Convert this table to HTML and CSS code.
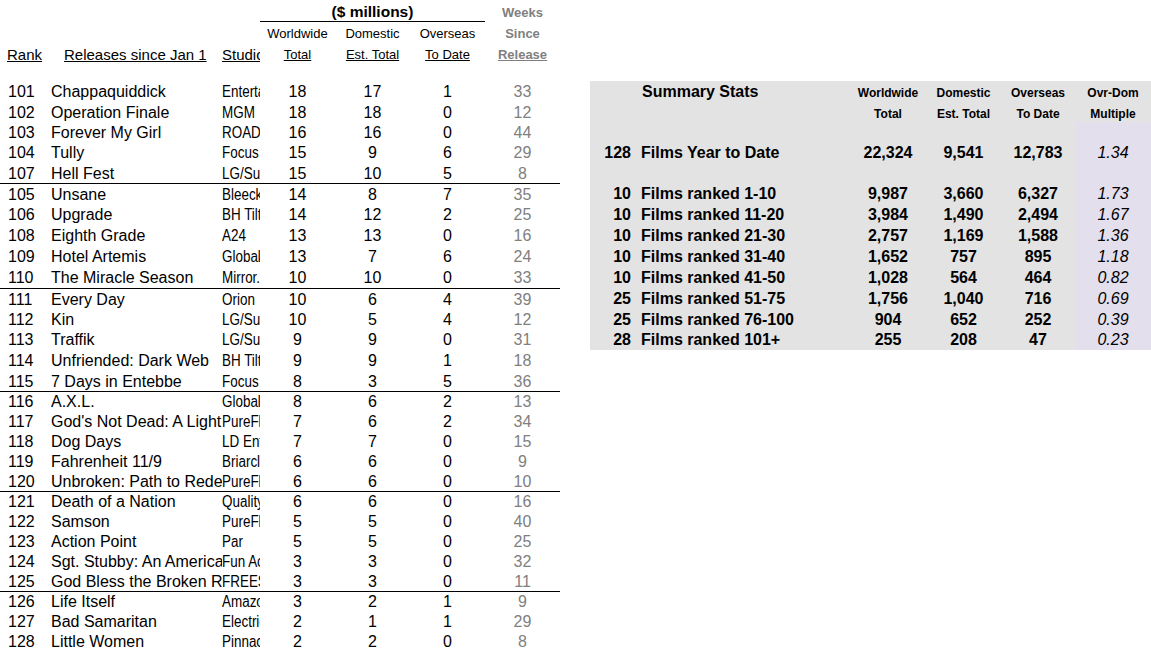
FILE: index.html
```html
<!DOCTYPE html>
<html>
<head>
<meta charset="utf-8">
<link rel="stylesheet" href="styles.css">
</head>
<body>
<div class="page">
  <div class="films">
    <div class="row hdr top h20">
      <div></div><div></div><div></div>
      <div class="millions">($ millions)</div>
      <div class="c gray b">Weeks</div>
    </div>
    <div class="row hdr h21">
      <div></div><div></div><div></div>
      <div class="c">Worldwide</div><div class="c">Domestic</div><div class="c">Overseas</div><div class="c gray b">Since</div>
    </div>
    <div class="row hdr h21">
      <div class="rank"><u class="big">Rank</u></div>
      <div class="title-h"><u class="big">Releases since Jan 1</u></div>
      <div class="studio-h"><u class="big">Studio</u></div>
      <div class="c"><u>Total</u></div><div class="c"><u>Est. Total</u></div><div class="c"><u>To Date</u></div><div class="c gray b"><u>Release</u></div>
    </div>
    <div class="row h17"></div>

    <div class="row data h204"><div class="rank">101</div><div class="title">Chappaquiddick</div><div class="studio"><span>Entertainment Studios</span></div><div class="c">18</div><div class="c">17</div><div class="c">1</div><div class="c gray">33</div></div>
    <div class="row data h204"><div class="rank">102</div><div class="title">Operation Finale</div><div class="studio"><span>MGM</span></div><div class="c">18</div><div class="c">18</div><div class="c">0</div><div class="c gray">12</div></div>
    <div class="row data h204"><div class="rank">103</div><div class="title">Forever My Girl</div><div class="studio"><span>ROADSIDE</span></div><div class="c">16</div><div class="c">16</div><div class="c">0</div><div class="c gray">44</div></div>
    <div class="row data h204"><div class="rank">104</div><div class="title">Tully</div><div class="studio"><span>Focus Features</span></div><div class="c">15</div><div class="c">9</div><div class="c">6</div><div class="c gray">29</div></div>
    <div class="row data h204"><div class="rank">107</div><div class="title">Hell Fest</div><div class="studio"><span>LG/Summit</span></div><div class="c">15</div><div class="c">10</div><div class="c">5</div><div class="c gray">8</div></div>

    <div class="row data h21 sep"><div class="rank">105</div><div class="title">Unsane</div><div class="studio"><span>Bleecker Street</span></div><div class="c">14</div><div class="c">8</div><div class="c">7</div><div class="c gray">35</div></div>
    <div class="row data h21"><div class="rank">106</div><div class="title">Upgrade</div><div class="studio"><span>BH Tilt</span></div><div class="c">14</div><div class="c">12</div><div class="c">2</div><div class="c gray">25</div></div>
    <div class="row data h21"><div class="rank">108</div><div class="title">Eighth Grade</div><div class="studio"><span>A24</span></div><div class="c">13</div><div class="c">13</div><div class="c">0</div><div class="c gray">16</div></div>
    <div class="row data h21"><div class="rank">109</div><div class="title">Hotel Artemis</div><div class="studio"><span>Global Road</span></div><div class="c">13</div><div class="c">7</div><div class="c">6</div><div class="c gray">24</div></div>
    <div class="row data h21"><div class="rank">110</div><div class="title">The Miracle Season</div><div class="studio"><span>Mirror.</span></div><div class="c">10</div><div class="c">10</div><div class="c">0</div><div class="c gray">33</div></div>

    <div class="row data h206 sep"><div class="rank">111</div><div class="title">Every Day</div><div class="studio"><span>Orion</span></div><div class="c">10</div><div class="c">6</div><div class="c">4</div><div class="c gray">39</div></div>
    <div class="row data h206"><div class="rank">112</div><div class="title">Kin</div><div class="studio"><span>LG/Summit</span></div><div class="c">10</div><div class="c">5</div><div class="c">4</div><div class="c gray">12</div></div>
    <div class="row data h206"><div class="rank">113</div><div class="title">Traffik</div><div class="studio"><span>LG/Summit</span></div><div class="c">9</div><div class="c">9</div><div class="c">0</div><div class="c gray">31</div></div>
    <div class="row data h206"><div class="rank">114</div><div class="title">Unfriended: Dark Web</div><div class="studio"><span>BH Tilt</span></div><div class="c">9</div><div class="c">9</div><div class="c">1</div><div class="c gray">18</div></div>
    <div class="row data h206"><div class="rank">115</div><div class="title">7 Days in Entebbe</div><div class="studio"><span>Focus Features</span></div><div class="c">8</div><div class="c">3</div><div class="c">5</div><div class="c gray">36</div></div>

    <div class="row data h20 sep"><div class="rank">116</div><div class="title">A.X.L.</div><div class="studio"><span>Global Road</span></div><div class="c">8</div><div class="c">6</div><div class="c">2</div><div class="c gray">13</div></div>
    <div class="row data h20"><div class="rank">117</div><div class="title">God's Not Dead: A Light in Darkness</div><div class="studio"><span>PureFlix</span></div><div class="c">7</div><div class="c">6</div><div class="c">2</div><div class="c gray">34</div></div>
    <div class="row data h20"><div class="rank">118</div><div class="title">Dog Days</div><div class="studio"><span>LD Entertainment</span></div><div class="c">7</div><div class="c">7</div><div class="c">0</div><div class="c gray">15</div></div>
    <div class="row data h20"><div class="rank">119</div><div class="title">Fahrenheit 11/9</div><div class="studio"><span>Briarcliff</span></div><div class="c">6</div><div class="c">6</div><div class="c">0</div><div class="c gray">9</div></div>
    <div class="row data h20"><div class="rank">120</div><div class="title">Unbroken: Path to Redemption</div><div class="studio"><span>PureFlix</span></div><div class="c">6</div><div class="c">6</div><div class="c">0</div><div class="c gray">10</div></div>

    <div class="row data h20 sep"><div class="rank">121</div><div class="title">Death of a Nation</div><div class="studio"><span>Quality Flix</span></div><div class="c">6</div><div class="c">6</div><div class="c">0</div><div class="c gray">16</div></div>
    <div class="row data h20"><div class="rank">122</div><div class="title">Samson</div><div class="studio"><span>PureFlix</span></div><div class="c">5</div><div class="c">5</div><div class="c">0</div><div class="c gray">40</div></div>
    <div class="row data h20"><div class="rank">123</div><div class="title">Action Point</div><div class="studio"><span>Par</span></div><div class="c">5</div><div class="c">5</div><div class="c">0</div><div class="c gray">25</div></div>
    <div class="row data h20"><div class="rank">124</div><div class="title">Sgt. Stubby: An American Hero</div><div class="studio"><span>Fun Academy</span></div><div class="c">3</div><div class="c">3</div><div class="c">0</div><div class="c gray">32</div></div>
    <div class="row data h20"><div class="rank">125</div><div class="title">God Bless the Broken Road</div><div class="studio"><span>FREESTYLE</span></div><div class="c">3</div><div class="c">3</div><div class="c">0</div><div class="c gray">11</div></div>

    <div class="row data h20 sep"><div class="rank">126</div><div class="title">Life Itself</div><div class="studio"><span>Amazon</span></div><div class="c">3</div><div class="c">2</div><div class="c">1</div><div class="c gray">9</div></div>
    <div class="row data h20"><div class="rank">127</div><div class="title">Bad Samaritan</div><div class="studio"><span>Electric</span></div><div class="c">2</div><div class="c">1</div><div class="c">1</div><div class="c gray">29</div></div>
    <div class="row data h20"><div class="rank">128</div><div class="title">Little Women</div><div class="studio"><span>Pinnacle</span></div><div class="c">2</div><div class="c">2</div><div class="c">0</div><div class="c gray">8</div></div>
  </div>

  <div class="summary">
    <div class="srow h204 shdr">
      <div></div><div class="stitle">Summary Stats</div>
      <div class="c sm">Worldwide</div><div class="c sm">Domestic</div><div class="c sm">Overseas</div><div class="c sm">Ovr-Dom</div>
    </div>
    <div class="srow h204 shdr">
      <div></div><div></div>
      <div class="c sm">Total</div><div class="c sm">Est. Total</div><div class="c sm">To Date</div><div class="c sm">Multiple</div>
    </div>
    <div class="srow h204"><div></div><div></div><div></div><div></div><div></div><div class="mult"></div></div>
    <div class="srow h204 sdata"><div class="cnt">128</div><div class="lbl">Films Year to Date</div><div class="c">22,324</div><div class="c">9,541</div><div class="c">12,783</div><div class="c mult">1.34</div></div>
    <div class="srow h204"><div></div><div></div><div></div><div></div><div></div><div class="mult"></div></div>
    <div class="srow h21 sdata"><div class="cnt">10</div><div class="lbl">Films ranked 1-10</div><div class="c">9,987</div><div class="c">3,660</div><div class="c">6,327</div><div class="c mult">1.73</div></div>
    <div class="srow h21 sdata"><div class="cnt">10</div><div class="lbl">Films ranked 11-20</div><div class="c">3,984</div><div class="c">1,490</div><div class="c">2,494</div><div class="c mult">1.67</div></div>
    <div class="srow h21 sdata"><div class="cnt">10</div><div class="lbl">Films ranked 21-30</div><div class="c">2,757</div><div class="c">1,169</div><div class="c">1,588</div><div class="c mult">1.36</div></div>
    <div class="srow h21 sdata"><div class="cnt">10</div><div class="lbl">Films ranked 31-40</div><div class="c">1,652</div><div class="c">757</div><div class="c">895</div><div class="c mult">1.18</div></div>
    <div class="srow h21 sdata"><div class="cnt">10</div><div class="lbl">Films ranked 41-50</div><div class="c">1,028</div><div class="c">564</div><div class="c">464</div><div class="c mult">0.82</div></div>
    <div class="srow h206 sdata"><div class="cnt">25</div><div class="lbl">Films ranked 51-75</div><div class="c">1,756</div><div class="c">1,040</div><div class="c">716</div><div class="c mult">0.69</div></div>
    <div class="srow h206 sdata"><div class="cnt">25</div><div class="lbl">Films ranked 76-100</div><div class="c">904</div><div class="c">652</div><div class="c">252</div><div class="c mult">0.39</div></div>
    <div class="srow h206 sdata"><div class="cnt">28</div><div class="lbl">Films ranked 101+</div><div class="c">255</div><div class="c">208</div><div class="c">47</div><div class="c mult">0.23</div></div>
  </div>
</div>
</body>
</html>
```

FILE: styles.css
```css
html, body {
  margin: 0;
  padding: 0;
  background: #ffffff;
}
body {
  font-family: "Liberation Sans", Arial, sans-serif;
  color: #000;
  font-size: 16px;
}
.page {
  display: flex;
  align-items: flex-start;
  width: 1151px;
  height: 651px;
  overflow: hidden;
}
.films {
  width: 560px;
  flex: none;
  padding-top: 2px;
}
.row {
  display: grid;
  grid-template-columns: 51px 171px 38px 75px 75px 75px 75px;
  align-items: center;
  box-sizing: border-box;
}
.row > div {
  white-space: nowrap;
  overflow: hidden;
  padding-top: 2px;
}
.top > div { padding-top: 0; }
.h17 { height: 17px; }
.h20 { height: 20px; }
.h204 { height: 20.4px; }
.h206 { height: 20.6px; }
.h21 { height: 21px; }
.sep { border-top: 1px solid #000; }
.hdr { font-size: 13px; }
.hdr .big { font-size: 15px; }
.row > .millions {
  grid-column: 4 / span 3;
  text-align: center;
  font-weight: bold;
  font-size: 15.5px;
  border-bottom: 1px solid #000;
  box-sizing: border-box;
  height: 20px;
  line-height: 19px;
  padding-top: 0;
  align-self: start;
}
.c { text-align: center; }
.b { font-weight: bold; }
.gray { color: #808080; }
.rank { padding-left: 7px; }
.data .rank { padding-left: 8px; }
.title-h { padding-left: 13px; }
.data .title { padding-right: 2px; }
.studio span {
  display: inline-block;
  transform: scaleX(0.84);
  transform-origin: left center;
}
.summary {
  margin-left: 30px;
  margin-top: 81px;
  width: 561px;
  flex: none;
  background: #e3e3e3;
}
.srow {
  display: grid;
  grid-template-columns: 46px 214px 76px 75px 74px 76px;
  align-items: center;
}
.srow > div {
  height: 100%;
  display: flex;
  align-items: center;
  white-space: nowrap;
  box-sizing: border-box;
  padding-top: 2px;
}
.srow > .c { justify-content: center; }
.shdr > div { align-items: flex-end; padding-bottom: 0; padding-top: 0; }
.shdr > .sm { padding-bottom: 1px; }
.stitle { font-weight: bold; padding-left: 6px; }
.sm { font-size: 12px; font-weight: bold; }
.sdata { font-weight: bold; }
.cnt { justify-content: flex-end; padding-right: 5px; }
.lbl { padding-left: 5px; }
.mult { background: #e4dfec; }
.sdata .mult { font-weight: normal; font-style: italic; }
```
